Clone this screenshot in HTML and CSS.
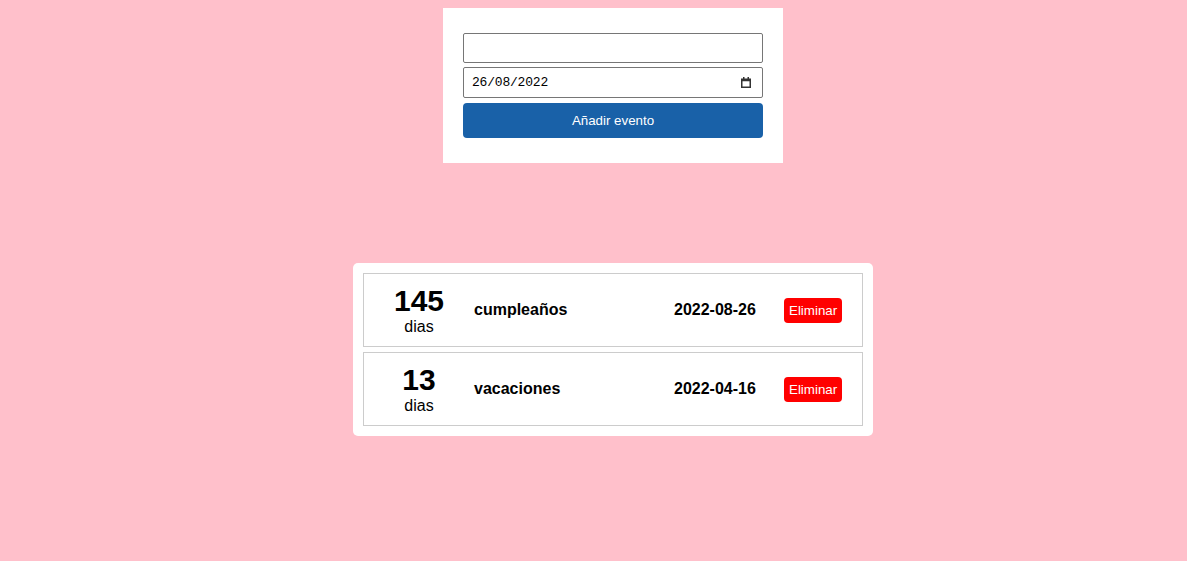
FILE: index.html
```html
<!DOCTYPE html>
<html lang="es">
<head>
<meta charset="utf-8">
<title>Eventos</title>
<link rel="stylesheet" href="styles.css">
</head>
<body>
<main class="page">
  <form class="event-form">
    <input class="field" type="text">
    <div class="date-wrap">
      <input class="field field-date" type="text" value="26/08/2022">
      <svg class="cal-icon" width="10" height="11" viewBox="0 0 10 11" aria-hidden="true">
        <rect x="0.75" y="2.25" width="8.5" height="8" fill="none" stroke="#333" stroke-width="1.5"/>
        <rect x="0.75" y="2.25" width="8.5" height="2" fill="#333"/>
        <rect x="2" y="0" width="1.5" height="3" fill="#333"/>
        <rect x="6.5" y="0" width="1.5" height="3" fill="#333"/>
      </svg>
    </div>
    <button class="add-btn" type="button">Añadir evento</button>
  </form>
  <section class="events">
    <div class="event">
      <div class="days"><div class="days-num">145</div><div class="days-label">dias</div></div>
      <div class="name">cumpleaños</div>
      <div class="date">2022-08-26</div>
      <button class="del-btn" type="button">Eliminar</button>
    </div>
    <div class="event">
      <div class="days"><div class="days-num">13</div><div class="days-label">dias</div></div>
      <div class="name">vacaciones</div>
      <div class="date">2022-04-16</div>
      <button class="del-btn" type="button">Eliminar</button>
    </div>
  </section>
</main>
</body>
</html>
```

FILE: styles.css
```css
html, body {
  margin: 0;
  padding: 0;
}
body {
  background: #ffc0cb;
  font-family: "Liberation Sans", Arial, sans-serif;
  color: #000;
}
.page {
  display: flex;
  flex-direction: column;
  align-items: center;
  padding: 8px 0 0 39px;
}
.event-form {
  width: 340px;
  box-sizing: border-box;
  background: #fff;
  padding: 25px 20px 25px;
  display: flex;
  flex-direction: column;
}
.field {
  box-sizing: border-box;
  width: 300px;
  height: 30px;
  margin: 0;
  border: 1px solid #767676;
  border-radius: 2px;
  background: #fff;
  padding: 1px 8px;
  font-family: "Liberation Mono", "DejaVu Sans Mono", monospace;
  font-size: 13px;
  letter-spacing: -0.2px;
  color: #000;
  display: block;
}
.date-wrap {
  position: relative;
  margin-top: 4px;
}
.field-date {
  height: 31px;
}
.cal-icon {
  position: absolute;
  right: 12px;
  top: 10px;
}
.add-btn {
  margin-top: 5px;
  width: 300px;
  height: 35px;
  border: none;
  border-radius: 4px;
  background: #1961a8;
  color: #fff;
  font-family: "Liberation Sans", Arial, sans-serif;
  font-size: 13.33px;
  padding: 0;
}
.events {
  margin-top: 100px;
  width: 520px;
  box-sizing: border-box;
  background: #fff;
  border-radius: 5px;
  padding: 10px;
  display: flex;
  flex-direction: column;
  gap: 5px;
}
.event {
  border: 1px solid #cccccc;
  padding: 10px;
  display: flex;
  align-items: center;
  height: 74px;
  box-sizing: border-box;
}
.days {
  width: 90px;
  margin-right: 10px;
  text-align: center;
}
.days-num {
  font-size: 30px;
  font-weight: bold;
  line-height: 34px;
}
.days-label {
  font-size: 16px;
  line-height: 18px;
}
.name {
  width: 200px;
  font-size: 16px;
  font-weight: bold;
}
.date {
  width: 110px;
  font-size: 16px;
  font-weight: bold;
}
.del-btn {
  background: #ff0000;
  color: #fff;
  border: none;
  border-radius: 4px;
  padding: 5px;
  font-family: "Liberation Sans", Arial, sans-serif;
  font-size: 13.33px;
  line-height: 15px;
}
```
